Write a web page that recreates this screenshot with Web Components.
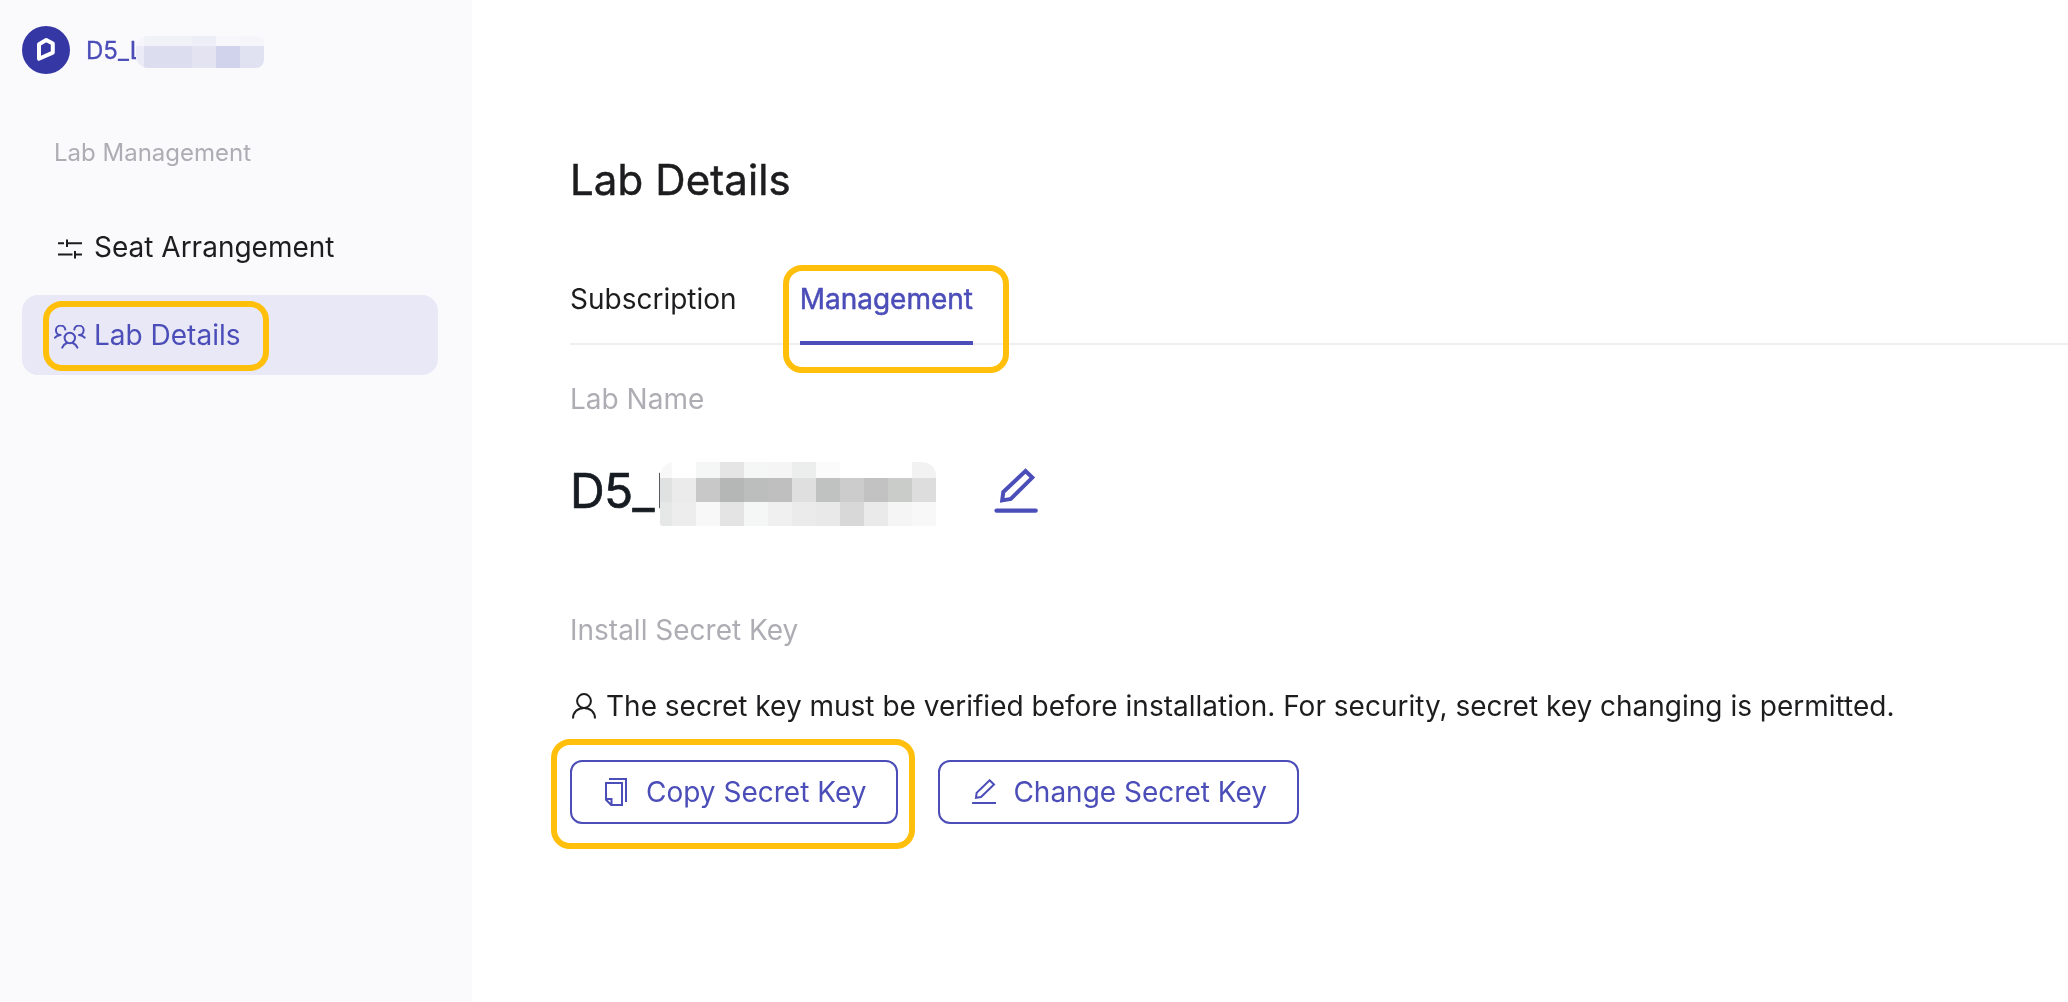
<!DOCTYPE html>
<html lang="en">
<head>
<meta charset="utf-8">
<title>Lab Details</title>
<style>
    html, body {
        margin: 0;
        height: 100%;
        overflow: hidden;
    }

    body {
        --primary-color: #4b4db8;
        --muted-color: #aeadb4;
        --text-color: #1d1d1f;
        --highlight-color: #ffbf0b;
        font-family: Inter, "Liberation Sans", sans-serif;
        font-size: 28px;
        line-height: 44px;
        color: var(--text-color);
        background: #fff;
    }
</style>
</head>
<body>
<lab-app>
    <lab-sidebar slot="sidebar">
        <lab-account slot="account">D5_L</lab-account>
        <span slot="heading">Lab Management</span>
        <nav-item icon="sliders">Seat Arrangement</nav-item>
        <nav-item icon="group" active>Lab Details</nav-item>
    </lab-sidebar>

    <page-title>Lab Details</page-title>
    <tab-bar>
        <tab-item>Subscription</tab-item>
        <tab-item active>Management</tab-item>
    </tab-bar>
    <field-label>Lab Name</field-label>
    <lab-name>D5_L</lab-name>
    <field-label>Install Secret Key</field-label>
    <key-note>The secret key must be verified before installation. For security, secret key changing is permitted.</key-note>
    <button-row>
        <call-out style="--inset: -21px -17px -25px -19px"><key-button icon="copy">Copy Secret Key</key-button></call-out>
        <key-button icon="edit">Change Secret Key</key-button>
    </button-row>
</lab-app>

<script>
const ICONS = {
    logo: {
        size: [20, 26],
        body: '<path d="M3 7.2 L10.2 3 L16.8 6.6 V15.6 L3 21.8 Z" stroke-width="4" stroke-linejoin="round"/>'
    },
    sliders: {
        size: [24, 20],
        body: '<path d="M0 4.3H6M9 4.3H24M9 .5V8M0 15.5H14.5M17.5 15.5H24M17 12V19.5" stroke-width="2"/>'
    },
    group: {
        size: [32, 24],
        body: `<g stroke-width="2" stroke-linecap="round">
            <circle cx="15.8" cy="13" r="5.2"/>
            <path d="M8.2 22.6C9.2 20.2 11 18.6 13.2 17.7M18.4 17.7C20.6 18.6 22.4 20.2 23.4 22.6"/>
            <path d="M11.3 4.6A4.7 4.7 0 1 0 6.6 10M6.6 10C4 10.2 2.2 11 1 12.7"/>
            <path d="M20.3 4.6A4.7 4.7 0 1 1 25 10M25 10C27.6 10.2 29.4 11 30.6 12.7"/></g>`
    },
    edit: {
        size: [24, 26],
        body: '<path d="M17.6 1.3L22 5.4L9 18L4 18.8L4.6 13.9Z" stroke-width="2"/><path d="M.8 24H23.4" stroke-width="2.2" stroke-linecap="round"/>'
    },
    editLarge: {
        size: [44, 46],
        body: '<path d="M31.5 3L38.3 9.6L16.8 31L8.2 32.4L9.3 24Z" stroke-width="4"/><path d="M2.6 42.6H41.6" stroke-width="4.4" stroke-linecap="round"/>'
    },
    copy: {
        size: [25, 28],
        body: '<path d="M5 1H22V24M2 5H18V27H7.2L2 21.8ZM2 21H7.5V27" stroke-width="2"/>'
    },
    user: {
        size: [24, 26],
        body: '<circle cx="12" cy="8" r="6.9" stroke-width="2"/><path d="M1 25.6C1 19 5.8 14.9 12 14.9S23 19 23 25.6" stroke-width="2"/>'
    }
};

function icon(name) {
    const { size: [w, h], body } = ICONS[name];
    return `<svg width="${w}" height="${h}" viewBox="0 0 ${w} ${h}" fill="none" stroke="currentColor">${body}</svg>`;
}

// Rows of [width, colour] blocks that cover a private name
function mosaic(rows) {
    return rows.map(([height, cells]) => `
        <div class="row" style="height:${height}px">
            ${cells.map(([w, c]) => `<i style="width:${w}px;background:${c}"></i>`).join('')}
        </div>`).join('');
}

// Base class: renders styles and markup into an open shadow root
class LabElement extends HTMLElement {
    constructor() {
        super();
        this.attachShadow({ mode: 'open' });
    }

    connectedCallback() {
        this.shadowRoot.innerHTML = `<style>${this.styles()}</style>${this.render()}`;
    }

    styles() {
        return ':host { display: block; }';
    }

    render() {
        return '<slot></slot>';
    }
}

class LabApp extends LabElement {
    // will-change keeps the text on its own layer, with greyscale antialiasing
    styles() {
        return `
            :host { display: flex; height: 100vh; will-change: transform; }
            main { flex: 1; min-width: 0; box-sizing: border-box; padding: 150px 0 0 98px; }
        `;
    }

    render() {
        return '<slot name="sidebar"></slot><main><slot></slot></main>';
    }
}

class LabSidebar extends LabElement {
    styles() {
        return `
            :host {
                display: block;
                box-sizing: border-box;
                width: 472px;
                padding: 26px 34px 0 22px;
                background: #fafafd;
            }
            .heading {
                margin: 60px 0 35px 32px;
                font-size: 24px;
                line-height: 38px;
                color: var(--muted-color);
            }
            nav { display: flex; flex-direction: column; gap: 8px; }
        `;
    }

    render() {
        return `
            <slot name="account"></slot>
            <div class="heading"><slot name="heading"></slot></div>
            <nav><slot></slot></nav>
        `;
    }
}

class LabAccount extends LabElement {
    styles() {
        return `
            :host {
                display: flex;
                align-items: center;
                height: 48px;
                color: var(--primary-color);
                font-size: 24px;
                -webkit-text-stroke: 0.3px;
            }
            .avatar {
                display: flex;
                align-items: center;
                justify-content: center;
                width: 48px;
                height: 48px;
                border-radius: 50%;
                background: #3537a5;
                color: #fff;
            }
            .name { width: 50px; margin: 1px 0 0 16px; overflow: hidden; white-space: nowrap; }
            .mask { width: 128px; border-radius: 12px 8px 8px 12px; overflow: hidden; margin-top: 4px; }
            .row { display: flex; }
        `;
    }

    render() {
        return `
            <span class="avatar">${icon('logo')}</span>
            <span class="name"><slot></slot></span>
            <div class="mask">${mosaic([
                [10, [[8, '#f5f5fb'], [48, '#f1f1f8'], [24, '#eeeef8'], [24, '#f8f8fc'], [24, '#f5f5fa']]],
                [22, [[8, '#ebebf7'], [48, '#dcddee'], [24, '#e3e3f1'], [24, '#d1d2ec'], [24, '#e1e2f1']]]
            ])}</div>
        `;
    }
}

class NavItem extends LabElement {
    styles() {
        return `
            :host { display: flex; align-items: center; height: 80px; border-radius: 16px; }
            :host([active]) { background: #e8e8f6; color: var(--primary-color); }
            .icon { display: flex; justify-content: center; width: 32px; margin: 3px 8px 0 32px; }
            call-out { --inset: -12px -29px -14px -51px; }
        `;
    }

    render() {
        const label = '<slot></slot>';
        return `
            <span class="icon">${icon(this.getAttribute('icon'))}</span>
            ${this.hasAttribute('active') ? `<call-out>${label}</call-out>` : `<span>${label}</span>`}
        `;
    }
}

// Yellow frame drawn over whatever is slotted
class CallOut extends LabElement {
    styles() {
        return `
            :host { display: block; position: relative; }
            :host::after {
                content: "";
                position: absolute;
                inset: var(--inset);
                border: 6px solid var(--highlight-color);
                border-radius: 19px;
                pointer-events: none;
            }
        `;
    }
}

class PageTitle extends LabElement {
    styles() {
        return `
            :host {
                display: block;
                font-size: 42px;
                line-height: 60px;
                letter-spacing: 0.1px;
                -webkit-text-stroke: 0.5px;
            }
        `;
    }
}

class TabBar extends LabElement {
    styles() {
        return `
            :host {
                display: flex;
                gap: 63px;
                box-sizing: border-box;
                height: 69px;
                margin-top: 66px;
                line-height: 46px;
                box-shadow: inset 0 -2px #efeff1;
            }
        `;
    }
}

class TabItem extends LabElement {
    styles() {
        return `
            :host { display: block; box-sizing: border-box; }
            :host([active]) { color: var(--primary-color); border-bottom: 4px solid; -webkit-text-stroke: 0.5px; }
            call-out { --inset: -11px -36px -51px -17px; }
        `;
    }

    render() {
        return this.hasAttribute('active') ? '<call-out><slot></slot></call-out>' : '<slot></slot>';
    }
}

class FieldLabel extends LabElement {
    styles() {
        return ':host { display: block; margin-top: 32px; color: var(--muted-color); }';
    }
}

class LabName extends LabElement {
    styles() {
        return `
            :host { display: flex; height: 64px; margin: 41px 0 82px; color: #171c22; }
            .name {
                width: 90px;
                overflow: hidden;
                font-size: 48px;
                line-height: 58px;
                letter-spacing: -0.6px;
                -webkit-text-stroke: 0.7px;
            }
            .mask { width: 276px; border-radius: 14px 14px 0 3px; overflow: hidden; }
            .row { display: flex; }
            .edit { margin: 6px 0 0 58px; color: var(--primary-color); }
        `;
    }

    render() {
        const row = (...colors) => colors.map((c, i) => [i ? 24 : 12, c]);
        return `
            <span class="name"><slot></slot></span>
            <div class="mask">${mosaic([
                [16, row('#f8f8f8', '#fff', '#f5f7f6', '#e5e5e5', '#f5f7f6', '#f5f5f5', '#eceeed', '#fbfbfb', '#fff', '#fff', '#fff', '#f2f2f2')],
                [24, row('#dfe2e1', '#ebebeb', '#c8c8c8', '#b4b7b6', '#bbbebd', '#bfbfbf', '#dfdfdf', '#bfc2c1', '#cccccc', '#c2c2c2', '#caccca', '#dddddd')],
                [24, row('#e5e8e7', '#ededed', '#f8f8f8', '#e4e4e4', '#f5f7f6', '#f0f0f0', '#ebebeb', '#e9e9e9', '#d8d8d8', '#eaeaea', '#f5f5f5', '#f8f8f8')]
            ])}</div>
            <span class="edit">${icon('editLarge')}</span>
        `;
    }
}

class KeyNote extends LabElement {
    styles() {
        return `
            :host { display: flex; align-items: center; gap: 10px; margin-top: 32px; padding-left: 2px; white-space: nowrap; }
            svg { display: block; }
        `;
    }

    render() {
        return `${icon('user')}<span><slot></slot></span>`;
    }
}

class ButtonRow extends LabElement {
    styles() {
        return ':host { display: flex; gap: 40px; margin-top: 32px; }';
    }
}

class KeyButton extends LabElement {
    styles() {
        return `
            :host { display: block; }
            button {
                display: flex;
                align-items: center;
                gap: 17px;
                height: 64px;
                padding: 0 30px 0 32px;
                border: 2px solid var(--primary-color);
                border-radius: 12px;
                background: #fff;
                color: var(--primary-color);
                font: inherit;
                white-space: nowrap;
            }
        `;
    }

    render() {
        return `<button>${icon(this.getAttribute('icon'))}<span><slot></slot></span></button>`;
    }
}

customElements.define('call-out', CallOut);
customElements.define('lab-app', LabApp);
customElements.define('lab-sidebar', LabSidebar);
customElements.define('lab-account', LabAccount);
customElements.define('nav-item', NavItem);
customElements.define('page-title', PageTitle);
customElements.define('tab-bar', TabBar);
customElements.define('tab-item', TabItem);
customElements.define('field-label', FieldLabel);
customElements.define('lab-name', LabName);
customElements.define('key-note', KeyNote);
customElements.define('button-row', ButtonRow);
customElements.define('key-button', KeyButton);
</script>
</body>
</html>
